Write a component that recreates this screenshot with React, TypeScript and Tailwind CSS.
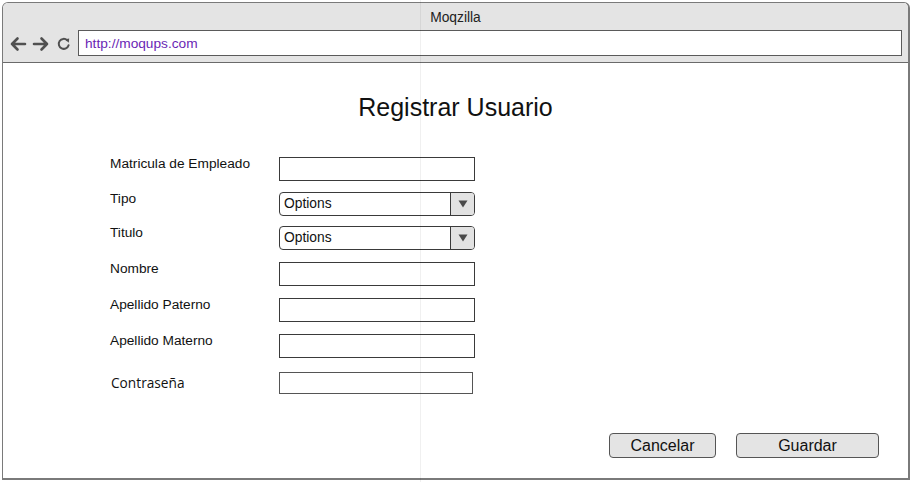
import React from "react";

const sans = { fontFamily: '"Liberation Sans", Arial, sans-serif' };

function TextBox({ w = "w-[196px]", h = "h-[24px]", border = "border-[#3a3a3a]" }: { w?: string; h?: string; border?: string }) {
  return <div className={`${w} ${h} border ${border} bg-white`} />;
}

function Select() {
  return (
    <div className="flex h-[24px] w-[196px] items-stretch overflow-hidden rounded-[4px] border border-[#3a3a3a] bg-white">
      <div className="flex flex-1 items-center pl-[4px] pt-[1px] text-[13.8px] text-[#111]">Options</div>
      <div className="flex w-[24px] items-center justify-center border-l border-[#3a3a3a] bg-[#e2e2e2]">
        <svg width="10" height="8" viewBox="0 0 10 8">
          <path d="M0.5 0.5 L9.5 0.5 L5 7.5 Z" fill="#4a4a4a" />
        </svg>
      </div>
    </div>
  );
}

function Row({ label, children }: { label: string; children: React.ReactNode }) {
  return (
    <div className="flex h-[24px] items-start">
      <div className="w-[169px] text-[13.7px] leading-[14px] text-[#111]">{label}</div>
      {children}
    </div>
  );
}

export default function App() {
  return (
    <div className="relative h-[482px] w-[912px] overflow-hidden bg-white p-[2px]" style={sans}>
      <div className="flex h-[478px] flex-col overflow-hidden rounded-t-[6px] border border-r-2 border-b-2 border-[#7a7a7a]">
        {/* browser chrome */}
        <div className="h-[60px] border-b border-[#6a6a6a] bg-[#e4e4e4]">
          <div className="flex h-[27px] items-center justify-center pt-[3px] text-[13.8px] text-[#222]">Moqzilla</div>
          <div className="flex items-center pl-[6px] pr-[6px]">
            <svg width="18" height="16" viewBox="0 0 18 16" className="mr-[5px] mt-[1px]">
              <path d="M16 8 H3 M8.5 2.5 L3 8 L8.5 13.5" stroke="#505050" strokeWidth="2.6" fill="none" strokeLinecap="round" strokeLinejoin="round" />
            </svg>
            <svg width="18" height="16" viewBox="0 0 18 16" className="mr-[6px] mt-[1px]">
              <path d="M2 8 H15 M9.5 2.5 L15 8 L9.5 13.5" stroke="#505050" strokeWidth="2.6" fill="none" strokeLinecap="round" strokeLinejoin="round" />
            </svg>
            <svg width="16" height="16" viewBox="0 0 16 16" className="mr-[6px] mt-[1px]">
              <path d="M12.6 9.2 A5 5 0 1 1 11.2 4.2" stroke="#505050" strokeWidth="2" fill="none" strokeLinecap="round" />
              <path d="M9 3.2 L13.2 2.6 L12.8 6.8 Z" fill="#505050" />
            </svg>
            <div className="flex h-[26px] flex-1 items-center border border-[#5a5a5a] bg-white pl-[6px] pt-[2px] text-[13.7px] text-[#6a1fb5]">
              http://moqups.com
            </div>
          </div>
        </div>

        {/* page */}
        <div className="flex flex-1 flex-col bg-white">
          <h1 className="mt-[29px] text-center text-[25px] leading-[30px] text-[#111]">Registrar Usuario</h1>

          <div className="ml-[107px] mt-[35px] flex flex-col gap-[12px]">
            <Row label="Matricula de Empleado"><TextBox /></Row>
            <div className="-mt-[1px]">
              <Row label="Tipo"><Select /></Row>
            </div>
            <div className="-mt-[2px]">
              <Row label="Titulo"><Select /></Row>
            </div>
            <Row label="Nombre"><TextBox /></Row>
            <Row label="Apellido Paterno"><TextBox /></Row>
            <Row label="Apellido Materno"><TextBox /></Row>
            <div className="mt-[2px] flex h-[22px] items-center">
              <div className="w-[169px] pl-[1px] text-[13.7px] text-[#111]" style={{ fontFamily: '"Open Sans", "Liberation Sans", sans-serif' }}>
                Contraseña
              </div>
              <TextBox w="w-[194px]" h="h-[22px]" border="border-[#555]" />
            </div>
          </div>

          <div className="mr-[29px] mt-[39px] flex justify-end gap-[20px]">
            <button className="h-[25px] w-[107px] rounded-[4px] border border-[#555] bg-[#e4e4e4] text-[16px] leading-[22px] text-[#111]">
              Cancelar
            </button>
            <button className="h-[25px] w-[143px] rounded-[4px] border border-[#555] bg-[#e4e4e4] text-[16px] leading-[22px] text-[#111]">
              Guardar
            </button>
          </div>
        </div>
      </div>

      {/* faint guide line */}
      <div className="pointer-events-none absolute left-[420px] top-0 h-full w-px bg-black/[0.06]" />
    </div>
  );
}
